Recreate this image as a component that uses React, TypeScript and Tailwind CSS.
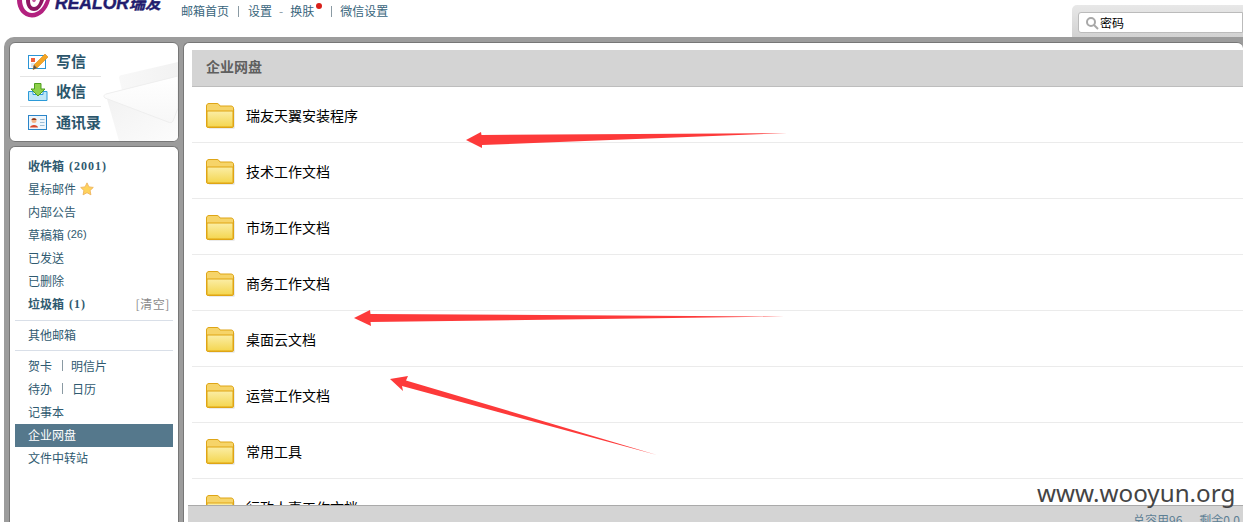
const cjk = "font-['Noto_Sans_CJK_SC','Liberation_Sans',sans-serif]";

const folders = [
  "瑞友天翼安装程序",
  "技术工作文档",
  "市场工作文档",
  "商务工作文档",
  "桌面云文档",
  "运营工作文档",
  "常用工具",
  "行政人事工作文档",
];

function Logo() {
  return (
    <div className="ml-[17px] flex h-[18px] w-[150px] items-start overflow-hidden">
      <svg width="34" height="18" viewBox="0 0 34 18" className="shrink-0">
        <path d="M0 0C0 9 6 17.500 15 17.500C23 17.500 30 11 33 0H29C26 8 21 13 15 13C9 13 5 7 5 0Z" fill="#b3217f" />
        <path d="M9 0C9 6 12 11 17 11C22 11 25 6 27 0H23C22 4 20 7 17 7C14 7 13 4 13 0Z" fill="#8d1763" />
        <path d="M15 0C16 3 18 3 19 0Z" fill="#c75aa2" />
      </svg>
      <span className="-mt-[8px] ml-[4px] whitespace-nowrap font-['Liberation_Sans',sans-serif] text-[17.500px] leading-[21px] font-bold text-[#221c6e] italic [-webkit-text-stroke:0.4px_#221c6e]">
        REALOR<span className={`${cjk} text-[16px]`}>瑞友</span>
      </span>
    </div>
  );
}

function Folder() {
  return (
    <svg width="29" height="26" viewBox="0 0 29 26" className="shrink-0">
      <path d="M3 25.500H28.500V6H27.500V24.500H3Z" fill="#d8d8d8" />
      <path d="M.5 3C.5 1.500 1.500.5 3 .5H11C12.500.5 13 1.500 14 3H25C26.500 3 27.500 4 27.500 5V23C27.500 24 27 24.500 26 24.500H2C1 24.500.5 24 .5 23Z" fill="#f6d469" stroke="#dea517" />
      <path d="M1 8H27V23C27 24 26.500 24 26 24H2C1.500 24 1 24 1 23Z" fill="url(#folderFront)" stroke="#e0a512" />
      <defs>
        <linearGradient id="folderFront" x1="0" y1="0" x2="0" y2="1">
          <stop offset="0" stopColor="#fbeea6" />
          <stop offset="1" stopColor="#f4d64f" />
        </linearGradient>
      </defs>
    </svg>
  );
}

function WriteIcon() {
  return (
    <svg width="20" height="16" viewBox="0 0 20 16" className="shrink-0">
      <rect x=".5" y="1.500" width="17" height="13" fill="#fff" stroke="#2b95d6" />
      <rect x="3" y="4" width="4" height="4" fill="#f0603a" />
      <path d="M3 10H8M3 12H7" stroke="#bcd" />
      <path d="M17 0L20 3L9 14L5 15.500L6 11Z" fill="#f5a623" stroke="#d9861a" strokeWidth=".6" />
      <path d="M6 11L9 14L5 15.500Z" fill="#555" />
    </svg>
  );
}

function ReceiveIcon() {
  return (
    <svg width="20" height="18" viewBox="0 0 20 18" className="shrink-0">
      <path d="M.5 8.500H5V11.500H15V8.500H19V17.500H.5Z" fill="#bfe6f7" stroke="#2b9ad8" />
      <path d="M6.500 .5H13V6H17L10 13L3 6H6.500Z" fill="#8fd14a" stroke="#4f9e1f" />
    </svg>
  );
}

function ContactIcon() {
  return (
    <svg width="19" height="15" viewBox="0 0 19 15" className="shrink-0">
      <rect x=".5" y=".5" width="18" height="14" fill="#eef6fc" stroke="#2b85c9" />
      <circle cx="6" cy="5.500" r="2.500" fill="#f3b58a" />
      <path d="M3.500 5C3.500 2.500 8.500 2.500 8.500 5Z" fill="#8b3a1e" />
      <path d="M2 12.500C2 9 10 9 10 12.500Z" fill="#d9482b" />
      <path d="M12 4.500H16.500M12 7.500H16.500M12 10.500H16.500" stroke="#9cbdd6" />
    </svg>
  );
}

function Star() {
  return (
    <svg width="14" height="14" viewBox="0 0 24 24" className="ml-[4px]">
      <path d="M12 1.500L15.300 8.400L22.800 9.300L17.300 14.500L18.700 22L12 18.300L5.300 22L6.700 14.500L1.200 9.300L8.700 8.400Z" fill="#ffd35c" stroke="#eeb25a" strokeWidth="1.500" />
    </svg>
  );
}

function Envelope() {
  return (
    <svg width="168" height="98" viewBox="0 0 168 98" className="absolute top-0 left-0">
      <defs>
        <linearGradient id="envBody" x1="0" y1="0" x2="1" y2="1">
          <stop offset="0" stopColor="#f1f1f1" />
          <stop offset="1" stopColor="#fcfcfc" />
        </linearGradient>
        <linearGradient id="envBack" x1="0" y1="0" x2="1" y2="0">
          <stop offset="0" stopColor="#f8f8f8" />
          <stop offset="1" stopColor="#f2f2f2" />
        </linearGradient>
        <linearGradient id="envFlap" x1="0" y1="0" x2="0" y2="1">
          <stop offset="0" stopColor="#ffffff" />
          <stop offset="1" stopColor="#f7f7f7" />
        </linearGradient>
      </defs>
      <path d="M109 35C109 33 110 32 112 32L168 19V42L112 47Z" fill="url(#envBack)" />
      <path d="M97 56L109 98H168V46Z" fill="url(#envBody)" />
      <path d="M95 55C93 53 94 52 96 51L168 33V65L163 78C162 80 160 80 158 79Z" fill="url(#envFlap)" stroke="#eeeeee" />
    </svg>
  );
}

function Row({ children, active, bold }: { children: React.ReactNode; active?: boolean; bold?: boolean }) {
  return (
    <div
      className={`mx-[5px] flex h-[23px] items-center pl-[13px] text-[12px] ${
        active ? "bg-[#55788c] pb-[1px] text-white" : "pb-[2px] text-[#2f5a70]"
      } ${bold ? "font-bold" : ""}`}
    >
      {children}
    </div>
  );
}

export default function App() {
  const compose = [
    { label: "写信", icon: <WriteIcon /> },
    { label: "收信", icon: <ReceiveIcon /> },
    { label: "通讯录", icon: <ContactIcon /> },
  ];

  return (
    <div className={`relative flex h-[522px] w-[1243px] flex-col overflow-hidden bg-white ${cjk}`}>
      {/* Header */}
      <header className="flex h-[37px] shrink-0 items-start">
        <Logo />
        <nav className="mt-[2px] ml-[14px] flex h-[18px] items-center text-[12px] text-[#38657c]">
          <span>邮箱首页</span>
          <span className="mr-[9px] ml-[9px] h-[11px] w-px bg-[#8a9aa3]" />
          <span>设置</span>
          <span className="mx-[7px] text-[#8a9aa3]">-</span>
          <span>换肤</span>
          <span className="mb-[10px] ml-[2px] h-[6px] w-[6px] rounded-full bg-[#d8201a]" />
          <span className="mr-[8px] ml-[9px] h-[11px] w-px bg-[#8a9aa3]" />
          <span>微信设置</span>
        </nav>
        <div className="mt-[5px] ml-auto h-[32px] w-[171px] rounded-tl-[5px] bg-gradient-to-b from-[#e8e8e8] to-[#d2d2d2] pt-[7px] pl-[6px]">
          <div className="flex h-[21px] items-center rounded-l-[3px] border border-[#bbbbbb] bg-white pl-[6px] text-[12px] text-black">
            <svg width="14" height="14" viewBox="0 0 14 14" className="mr-[1px]">
              <circle cx="6" cy="6" r="4" fill="none" stroke="#a8a8a8" strokeWidth="2" />
              <path d="M9 9L13 13" stroke="#a8a8a8" strokeWidth="2" />
            </svg>
            密码
          </div>
        </div>
      </header>

      {/* Frame */}
      <div className="ml-[4px] flex min-h-0 flex-1 gap-[4px] rounded-tl-[10px] bg-[#9c9c9c] pt-[5px] pl-[5px]">
        <aside className="flex w-[170px] shrink-0 flex-col gap-[4px]">
          <div className="relative h-[100px] shrink-0 overflow-hidden rounded-[6px] border border-[#777777] bg-white pt-[4px]">
            <Envelope />
            {compose.map((item, i) => (
              <div
                key={item.label}
                className={`relative ml-[10px] flex h-[30px] w-[81px] items-center ${
                  i < 2 ? "border-b border-[#e4e4e4]" : ""
                }`}
              >
                <div className="ml-[8px] flex w-[20px] justify-center">{item.icon}</div>
                <span className="ml-[8px] text-[15px] font-bold whitespace-nowrap text-[#2b566c]">{item.label}</span>
              </div>
            ))}
          </div>

          <div className="min-h-0 flex-1 rounded-t-[6px] border border-b-0 border-[#777777] bg-white pt-[8px]">
            <Row bold>
              收件箱
              <span className="ml-[5px] font-['Liberation_Serif',serif] tracking-[1px]">(2001)</span>
            </Row>
            <Row>
              星标邮件
              <Star />
            </Row>
            <Row>内部公告</Row>
            <Row>
              草稿箱
              <span className="ml-[3px] font-['Liberation_Sans',sans-serif] text-[11px]">(26)</span>
            </Row>
            <Row>已发送</Row>
            <Row>已删除</Row>
            <Row bold>
              垃圾箱
              <span className="ml-[5px] font-['Liberation_Serif',serif] tracking-[1px]">(1)</span>
              <span className="mr-[3px] ml-auto font-normal tracking-[0.6px] text-[#8a8a8a]">[清空]</span>
            </Row>
            <div className="mx-[5px] mt-[4px] mb-[3px] h-px bg-[#d9dfe8]" />
            <Row>其他邮箱</Row>
            <div className="mx-[5px] mt-[3px] mb-[4px] h-px bg-[#d9dfe8]" />
            <Row>
              贺卡
              <span className="mr-[8px] ml-[10px] h-[11px] w-px bg-[#8a9aa3]" />
              明信片
            </Row>
            <Row>
              待办
              <span className="mr-[9px] ml-[10px] h-[11px] w-px bg-[#8a9aa3]" />
              日历
            </Row>
            <Row>记事本</Row>
            <Row active>企业网盘</Row>
            <Row>文件中转站</Row>
          </div>
        </aside>

        {/* Main */}
        <main className="flex min-w-0 flex-1 flex-col rounded-t-[6px] border-t border-l border-[#777777] bg-white pt-[7px]">
          <h1 className="ml-[8px] flex h-[37px] shrink-0 items-center border-b border-[#bdbdbd] bg-[#d4d4d4] pb-[3px] pl-[14px] text-[14px] font-bold text-[#5f5f5f]">
            企业网盘
          </h1>
          <div className="ml-[8px] min-h-0 flex-1 overflow-hidden">
            {folders.map((name) => (
              <div key={name} className="flex h-[56px] items-center border-b border-[#ebebeb] pt-[2px] pl-[14px] text-[14px] text-black">
                <Folder />
                <span className="ml-[11px]">{name}</span>
              </div>
            ))}
          </div>
          <footer className="ml-[4px] h-[17px] shrink-0 overflow-hidden border-t border-[#aaaaaa] bg-[#d4d4d4] pt-[6px] pl-[945px] text-[12px] leading-[16px] whitespace-nowrap text-[#5d8094]">
            总容用96<span className="ml-[17px]">剩余0.0</span>
          </footer>
        </main>
      </div>

      {/* Annotations drawn on top of the screenshot */}
      <svg width="1243" height="522" viewBox="0 0 1243 522" className="pointer-events-none absolute top-0 left-0">
        <path d="M466 140L481 132L481.500 135L787 133L482 145L482 148Z" fill="#fd3a3a" />
        <path d="M354 318L370 310L370.500 314L784 316.500L370.500 322L371 326Z" fill="#fd3a3a" />
        <path d="M390 379L408 376L406 380.500L657 455L402 386L403 391Z" fill="#fd3a3a" />
      </svg>
      <span className="absolute top-[477px] left-[1037px] font-['Noto_Sans',sans-serif] text-[24.200px] leading-[32px] whitespace-nowrap text-[#444444]">
        www.wooyun.org
      </span>
    </div>
  );
}
